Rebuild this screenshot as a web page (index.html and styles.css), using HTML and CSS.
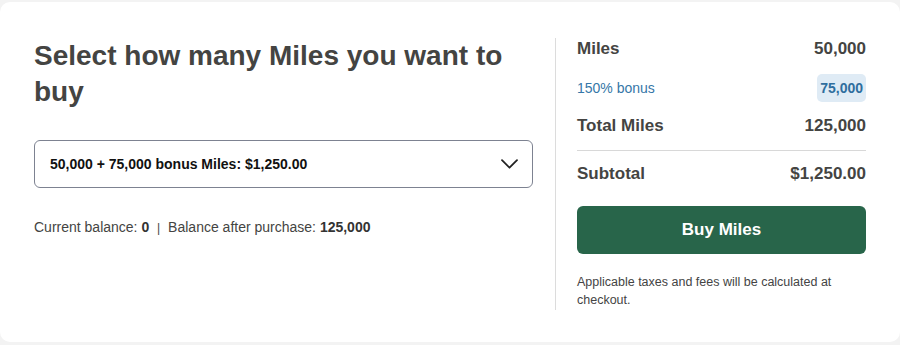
FILE: index.html
```html
<!DOCTYPE html>
<html lang="en">
<head>
    <meta charset="UTF-8">
    <meta name="viewport" content="width=device-width, initial-scale=1.0">
    <title>Buy Miles</title>
    <link rel="stylesheet" href="styles.css">
</head>
<body>
    <div class="card">
        <div class="left">
            <h1>Select how many Miles you want to buy</h1>
            <div class="select">
                <span>50,000 + 75,000 bonus Miles: $1,250.00</span>
                <svg class="chevron" width="17" height="10" viewBox="0 0 17 10">
                    <path d="M1 1.2l7.5 7.5 7.5-7.5" fill="none" stroke="#222" stroke-width="1.8" stroke-linecap="round" stroke-linejoin="round"/>
                </svg>
            </div>
            <p class="balance">Current balance: <b>0</b> <span class="sep">|</span> Balance after purchase: <b>125,000</b></p>
        </div>
        <div class="right">
            <div class="row big">
                <span>Miles</span>
                <span>50,000</span>
            </div>
            <div class="row bonus">
                <span>150% bonus</span>
                <span class="badge">75,000</span>
            </div>
            <div class="row big total">
                <span>Total Miles</span>
                <span>125,000</span>
            </div>
            <div class="row big subtotal">
                <span>Subtotal</span>
                <span>$1,250.00</span>
            </div>
            <button class="buy">Buy Miles</button>
            <p class="note">Applicable taxes and fees will be calculated at checkout.</p>
        </div>
    </div>
</body>
</html>
```

FILE: styles.css
```css
body {
    margin: 0;
    background: #f3f3f3;
    font-family: "Liberation Sans", Arial, sans-serif;
    color: #444442;
}
.card {
    margin-top: 2px;
    height: 340px;
    box-sizing: border-box;
    background: #fff;
    border-radius: 10px;
    padding: 36px 34px 0 34px;
    display: flex;
}
.left {
    width: 499px;
    padding-right: 22px;
}
h1 {
    margin: 0;
    font-size: 28px;
    line-height: 36px;
    font-weight: bold;
    color: #444442;
}
.select {
    margin-top: 30px;
    height: 48px;
    box-sizing: border-box;
    border: 1px solid #7d8291;
    border-radius: 6px;
    display: flex;
    align-items: center;
    justify-content: space-between;
    padding: 0 14px 0 15px;
    font-size: 14px;
    font-weight: bold;
    color: #111;
}
.balance {
    margin: 30px 0 0 0;
    font-size: 14px;
    line-height: 18px;
}
.balance b {
    color: #333;
}
.sep {
    margin: 0 4px;
    font-size: 12px;
}
.right {
    width: 289px;
    border-left: 1px solid #dcdcdc;
    padding-left: 21px;
    height: 272px;
}
.row {
    display: flex;
    justify-content: space-between;
    align-items: center;
}
.big {
    font-size: 17px;
    font-weight: bold;
    line-height: 22px;
}
.bonus {
    margin-top: 14px;
    font-size: 14px;
    color: #3677a8;
}
.badge {
    background: #dfebf5;
    border-radius: 5px;
    padding: 0 3px;
    line-height: 28px;
    font-weight: bold;
    color: #2f6e9e;
}
.total {
    margin-top: 13px;
    padding-bottom: 13px;
    border-bottom: 1px solid #d8d8d8;
}
.subtotal {
    margin-top: 12px;
}
.buy {
    margin-top: 21px;
    width: 100%;
    height: 48px;
    border: none;
    border-radius: 6px;
    background: #28654a;
    color: #fff;
    font-family: inherit;
    font-size: 17px;
    font-weight: bold;
    cursor: pointer;
}
.note {
    margin: 19px 0 0 0;
    font-size: 12.5px;
    line-height: 18px;
    color: #444;
    padding-right: 30px;
}
```
